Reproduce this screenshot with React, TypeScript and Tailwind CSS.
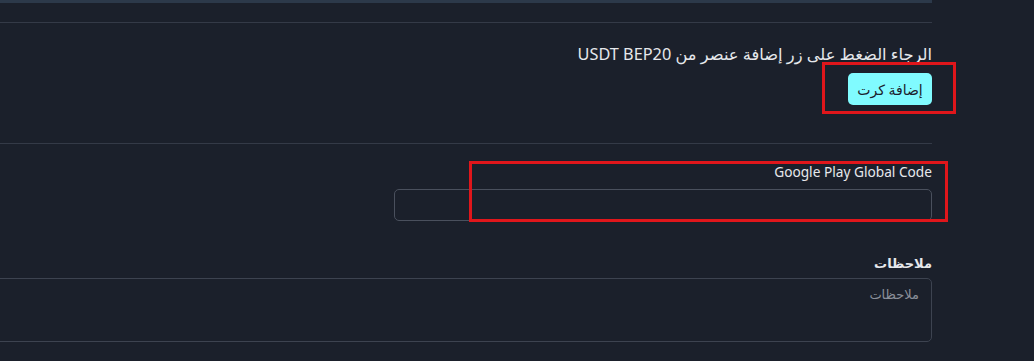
export default function App() {
  return (
    <div
      className="relative flex h-[361px] w-full overflow-hidden bg-[#1b202b]"
      style={{ fontFamily: '"Noto Sans", "DejaVu Sans", sans-serif' }}
    >
      <div dir="rtl" className="w-[932px] shrink-0 overflow-hidden">
        <div className="h-[3px] bg-[#2c394a]" />
        <div className="mt-[19px] h-px bg-[#343a47]" />

        <div className="pt-[19px]">
          <p className="text-[16.3px] leading-[24px] text-[#e6e8ec]">الرجاء الضغط على زر إضافة عنصر من USDT BEP20</p>
          <button className="mt-[7px] h-[32px] w-[84px] rounded-[5px] bg-[#80fbff] text-[14px] text-[#1b202b]">
            إضافة كرت
          </button>
        </div>

        <div className="mt-[38px] h-px bg-[#343a47]" />

        <div className="pt-[18px]">
          <label className="block text-[13.7px] leading-[20px] text-[#e6e8ec]">Google Play Global Code</label>
          <input
            type="text"
            className="mt-[7px] block h-[32px] w-[538px] rounded-[5px] border border-[#4a505d] bg-transparent px-3 text-[13px] text-white outline-none"
          />
        </div>

        <div className="pt-[32px]">
          <label className="block text-[13px] font-bold leading-[20px] text-[#e6e8ec]">ملاحظات</label>
          <textarea
            placeholder="ملاحظات"
            className="mt-[5px] block h-[64px] w-[960px] resize-none rounded-[5px] border border-[#3d4350] bg-transparent px-3 py-[6px] text-[13px] text-white outline-none placeholder:text-[#8a8f99]"
          />
        </div>
      </div>
      <div className="flex-1" />

      <div className="pointer-events-none absolute left-[822px] top-[62px] h-[52px] w-[134px] border-[3px] border-[#e0161b]" />
      <div className="pointer-events-none absolute left-[469px] top-[161px] h-[61px] w-[479px] border-[3px] border-[#e0161b]" />
    </div>
  )
}
